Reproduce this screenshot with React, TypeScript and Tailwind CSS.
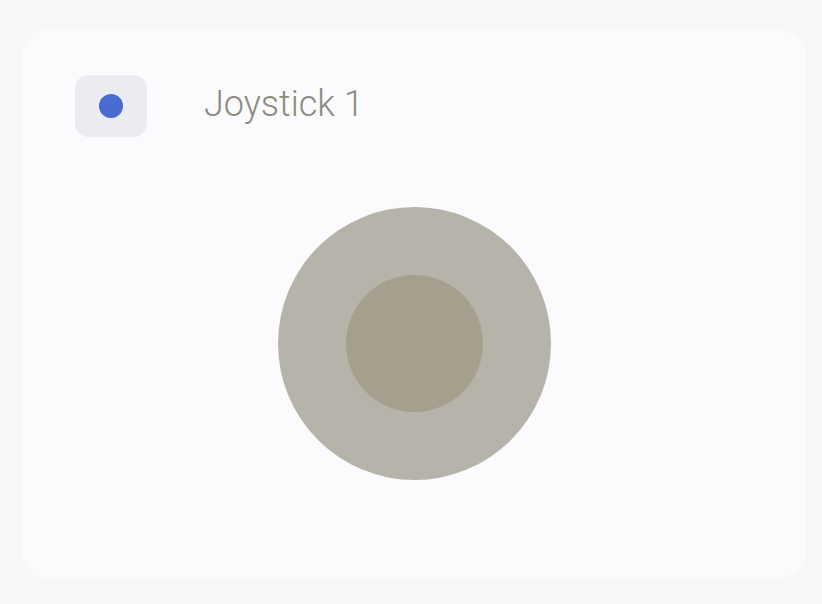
import React from "react";

export default function App() {
  return (
    <div className="w-[822px] h-[604px] bg-[#f8f7f7] pt-[29px] pl-[22px]" style={{ fontFamily: "Roboto, 'Liberation Sans', sans-serif" }}>
      <div className="w-[784px] h-[550px] rounded-[28px] bg-[#fbfbfd] flex flex-col">
        <div className="flex items-center pl-[53px] pt-[46px]">
          <div className="w-[72px] h-[62px] rounded-[14px] bg-[#ebebf1] flex items-center justify-center">
            <div className="w-[24px] h-[24px] rounded-full bg-[#4a6bd0]" />
          </div>
          <div className="ml-[57px] -mt-[4px] text-[36px] leading-none font-light text-[#8c8b80]">Joystick 1</div>
        </div>
        <div className="flex justify-center mt-[70px]">
          <div className="w-[273px] h-[273px] rounded-full bg-[#b6b4aa] flex items-center justify-center">
            <div className="w-[137px] h-[137px] rounded-full bg-[#a4a08d]" />
          </div>
        </div>
      </div>
    </div>
  );
}
